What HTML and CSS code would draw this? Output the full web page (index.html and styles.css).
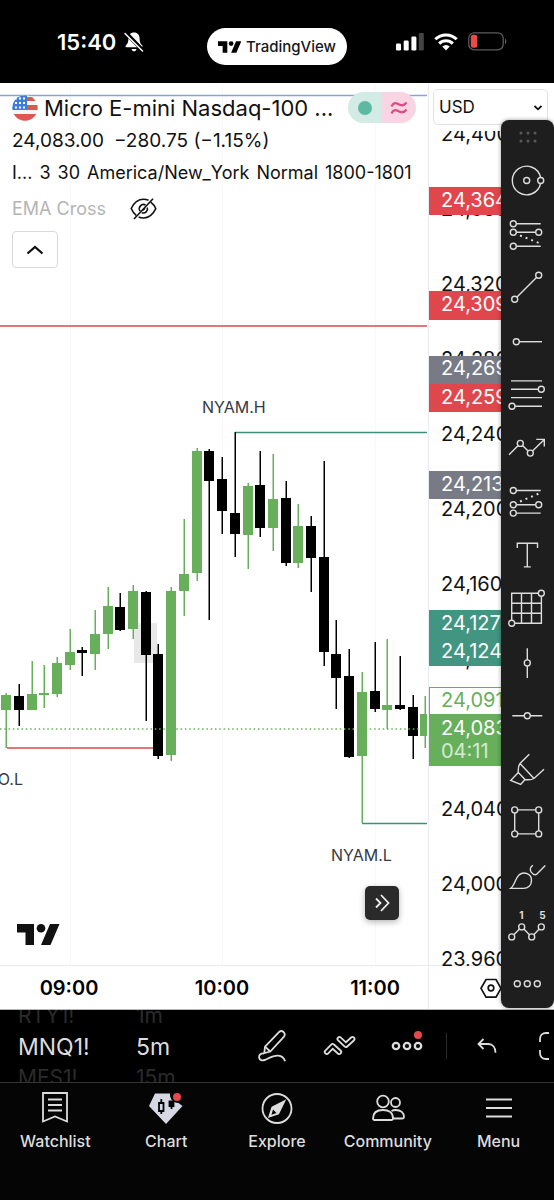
FILE: index.html
```html
<!DOCTYPE html>
<html lang="en">
<head>
  <meta charset="UTF-8">
  <meta name="viewport" content="width=device-width, initial-scale=1.0">
  <title>TradingView</title>
  <link rel="stylesheet" href="styles.css">
</head>
<body>
  <header class="status-bar">
    <div class="status-left">
      <span class="clock">15:40</span>
      <svg width="20" height="20" viewBox="0 0 20 20">
        <path d="M10 0.5c-3.6 0-5.6 2.6-5.6 6 0 4-1 5.500-2.600 7-.7.8-.2 1.800.7 1.800h15c.9 0 1.400-1 .7-1.800-1.600-1.500-2.600-3-2.600-7 0-3.400-2-6-5.600-6z" fill="#fff"/>
        <path d="M7.500 17h5c-.4 1.500-1.300 2.300-2.500 2.300s-2.100-.8-2.500-2.300z" fill="#fff"/>
        <path d="M1.500 0.500l18 18.500" stroke="#000" stroke-width="4"/>
        <path d="M1 1.500l17.500 17.500" stroke="#fff" stroke-width="1.500" stroke-linecap="round"/>
      </svg>
    </div>
    <a class="app-pill" href="#">
      <svg width="23" height="12" viewBox="0 0 42 21">
        <path d="M0 0h17v21H8.500V8.500H0zM33 0h9.500l-9 21h-9.500z"/>
        <circle cx="24" cy="4.300" r="4.300"/>
      </svg>
      <span>TradingView</span>
    </a>
    <div class="status-right">
      <svg width="28" height="18" viewBox="0 0 28 18" fill="#fff">
        <rect x="0" y="10.500" width="5" height="7" rx="1.300"/>
        <rect x="7.700" y="7.500" width="5" height="10" rx="1.300"/>
        <rect x="15.400" y="3.500" width="5" height="14" rx="1.300"/>
        <rect x="22.800" y="0" width="5" height="17.500" rx="1.300" fill="#444"/>
      </svg>
      <svg width="24" height="18" viewBox="0 0 24 18" fill="none" stroke="#fff" stroke-width="3">
        <path d="M1.300 6.300a15.300 15.300 0 0 1 21.400 0"/>
        <path d="M5.200 10.600a9.700 9.700 0 0 1 13.600 0"/>
        <path d="M12 17.500l-3.700-3.900a5.300 5.300 0 0 1 7.400 0z" fill="#fff" stroke="none"/>
      </svg>
      <svg width="39" height="19" viewBox="0 0 39 19">
        <rect x="0.800" y="0.800" width="34.400" height="17" rx="5.500" fill="none" stroke="#5c5c5c" stroke-width="1.300"/>
        <rect x="2.800" y="2.800" width="6.500" height="13" rx="2.500" fill="#f0494a"/>
        <path d="M37 6.500c1.800.8 1.800 5 0 5.800z" fill="#5c5c5c"/>
      </svg>
    </div>
  </header>

  <main class="chart">
    <svg class="chart-canvas" viewBox="0 0 554 927">
      <!-- Grid -->
      <path d="M70.500 0v882M222.500 0v882M375.500 0v882" stroke="#f8f8f8"/>
      <path d="M428.500 0v927M0 882.500h554" stroke="#e9eaf2"/>
      <path d="M0 926.500h554" stroke="#b8b8b8"/>

      <!-- Drawn levels -->
      <path d="M0 12.500h427" stroke="#8c9ee8" stroke-width="1.500"/>
      <path d="M0 243h427" stroke="#d9494b" stroke-width="1.500"/>
      <rect x="134" y="540" width="23" height="40" fill="#e8e8e8"/>
      <path d="M7 665h148" stroke="#d9494b" stroke-width="1.500"/>
      <path d="M235 349.500h192M362 740.500h65" stroke="#3f9079" stroke-width="1.500"/>

      <g id="candles"></g>

      <path d="M0 646h427" stroke="#67af5b" stroke-width="1.300" stroke-dasharray="1.500 2.800"/>

      <g class="level-text">
        <text x="202" y="330">NYAM.H</text>
        <text x="331" y="778">NYAM.L</text>
        <text x="23" y="702" text-anchor="end">O.L</text>
      </g>

      <!-- Price scale -->
      <g class="price-text">
        <text x="441" y="58">24,400</text>
        <text x="441" y="133">24,360</text>
        <text x="441" y="208">24,320</text>
        <text x="441" y="283">24,280</text>
        <text x="441" y="358">24,240</text>
        <text x="441" y="433">24,200</text>
        <text x="441" y="508">24,160</text>
        <text x="441" y="583">24,120</text>
        <text x="441" y="733">24,040</text>
        <text x="441" y="808">24,000</text>
        <text x="441" y="883">23,960</text>
      </g>
      <rect x="429" y="40" width="125" height="8" fill="#fff"/>
      <rect x="429" y="883" width="125" height="8" fill="#fff"/>
      <path d="M429 104h125v28h-125zM429 208h125v29h-125zM429 301h125v28h-125z" fill="#e0474c"/>
      <path d="M429 273h125v28h-125zM429 388h125v28h-125z" fill="#787b86"/>
      <path d="M429 527h125v56h-125z" fill="#429580"/>
      <path d="M429 604h125v79h-125z" fill="#67af5b"/>
      <path d="M430 605h123v26h-123z" fill="#fff"/>
      <g class="price-text light">
        <text x="441" y="124">24,364</text>
        <text x="441" y="228">24,309</text>
        <text x="441" y="292">24,269</text>
        <text x="441" y="321">24,259</text>
        <text x="441" y="408">24,213</text>
        <text x="441" y="547">24,127</text>
        <text x="441" y="575">24,124</text>
        <text x="441" y="624" class="last-high">24,091</text>
        <text x="441" y="652">24,083</text>
        <text x="441" y="675" class="countdown">04:11</text>
      </g>

      <!-- Time scale -->
      <g class="time-text">
        <text x="69" y="912">09:00</text>
        <text x="222" y="912">10:00</text>
        <text x="375" y="912">11:00</text>
      </g>
      <g fill="none" stroke="#111" stroke-width="1.700">
        <path d="M486 896.500h10l5 8.800-5 8.800h-10l-5-8.800z"/>
        <circle cx="491" cy="905" r="2.800"/>
      </g>
    </svg>

    <section class="legend">
      <div class="legend-title">
        <svg width="26" height="26" viewBox="0 0 26 26">
          <clipPath id="flag"><circle cx="13" cy="13" r="12.700"/></clipPath>
          <g clip-path="url(#flag)">
            <path fill="#f5f5f7" d="M0 0h26v26H0z"/>
            <path fill="#e0574f" d="M15 2h11v4H15zM15 10h11v5H15zM0 19h26v7H0z"/>
            <path fill="#3c7dd9" d="M0 0h15v15H0z"/>
            <path d="M3 3.500h12M3 8h12M3 12.500h12" stroke="#fff" stroke-width="2" stroke-dasharray="2 2"/>
          </g>
        </svg>
        <h1>Micro E-mini Nasdaq-100 ...</h1>
        <div class="market-status">
          <span class="open"><i></i></span>
          <span class="approx">
            <svg width="18" height="14" viewBox="0 0 18 14" fill="none" stroke="#dd4c86" stroke-width="2.200">
              <path d="M1.500 5.500C3 2 5.500 1.500 8 3s6 2 8.500-1.500M1.500 12.500C3 9 5.500 8.500 8 10s6 2 8.500-1.500"/>
            </svg>
          </span>
        </div>
      </div>
      <div class="legend-price"><span>24,083.00</span><span>−280.75 (−1.15%)</span></div>
      <div class="legend-row inputs">
        <span>I...</span><span>3</span><span>30</span><span>America/New_York</span><span>Normal</span><span>1800-1801</span>
      </div>
      <div class="legend-row muted">
        <span>EMA Cross</span>
        <button aria-label="Show indicator">
          <svg width="27" height="22" viewBox="0 0 27 22" fill="none" stroke="#111" stroke-width="1.600">
            <path d="M18.500 2.300C17 1.600 15.300 1.200 13.500 1.200 7.500 1.200 3.500 5.500 1.200 10.500 2.200 13 4 15.500 6.200 17.300M8.600 19c1.500.7 3.100 1 4.900 1 6 0 10-4.500 12.300-9.300-1.100-2.700-2.900-5-5-6.600"/>
            <path d="M10 13a4.200 4.200 0 0 1 5.500-6M17.300 9.500a4.200 4.200 0 0 1-5.500 5.200M23 0.800L4 21"/>
            <path d="M13 12.300l2-2"/>
          </svg>
        </button>
      </div>
      <button class="collapse" aria-label="Collapse legend">
        <svg width="18" height="10" viewBox="0 0 18 10" fill="none" stroke="#111" stroke-width="2.300"><path d="M1.500 8.500L9 2l7.500 6.500"/></svg>
      </button>
    </section>

    <label class="currency">
      <select aria-label="Currency">
        <option>USD</option>
      </select>
      <svg width="10" height="6" viewBox="0 0 10 6" fill="none" stroke="#111" stroke-width="1.800"><path d="M1.500 1L5 4.300 8.500 1"/></svg>
    </label>

    <svg class="chart-logo" width="43" height="21" viewBox="0 0 43 21" fill="#111">
      <path d="M0 0h17v21H8.500V8.500H0zM33 0h9.500l-9 21h-9.500z"/>
      <circle cx="24" cy="4.300" r="4.300"/>
    </svg>

    <button class="scroll-last" aria-label="Scroll to the most recent bar">
      <svg width="16" height="18" viewBox="0 0 16 18" fill="none" stroke="#eee" stroke-width="1.800"><path d="M2 4.500L6.500 9 2 13.500M7 1l7.500 8L7 17"/></svg>
    </button>

    <aside class="drawing-bar">
      <div class="drag-handle">
        <svg width="18" height="12" viewBox="0 0 18 12" fill="#5a5a5a">
          <circle cx="2" cy="2" r="1.500"/><circle cx="9" cy="2" r="1.500"/><circle cx="16" cy="2" r="1.500"/>
          <circle cx="2" cy="10" r="1.500"/><circle cx="9" cy="10" r="1.500"/><circle cx="16" cy="10" r="1.500"/>
        </svg>
      </div>
      <div class="tools">
        <button aria-label="Circle"><svg viewBox="0 0 53 48">
          <path d="M39.600 20.500a14.300 14.300 0 1 0 0 6"/><circle cx="25.700" cy="23.500" r="3"/><circle cx="39.700" cy="23.500" r="3"/>
        </svg></button>
        <button aria-label="Fib channel"><svg viewBox="0 0 53 48">
          <path d="M15.300 12.800h24.400M15.300 21.200h19.400M15.300 35.200h24.400"/><path class="dots" d="M19 24.500l19 7.500"/>
          <circle cx="12.300" cy="12.800" r="3"/><circle cx="12.300" cy="21.200" r="3"/><circle cx="37.700" cy="21.200" r="3"/><circle cx="12.300" cy="35.200" r="3"/>
        </svg></button>
        <button aria-label="Trend line"><svg viewBox="0 0 53 48">
          <path d="M16 33l19.500-19.500"/><circle cx="13.700" cy="35.300" r="3"/><circle cx="37.700" cy="11.300" r="3"/>
        </svg></button>
        <button aria-label="Horizontal ray"><svg viewBox="0 0 53 48">
          <path d="M18.300 23.700H41"/><circle cx="15.300" cy="23.700" r="3"/>
        </svg></button>
        <button aria-label="Fib retracement"><svg viewBox="0 0 53 48">
          <path d="M10 9.900h31M10 18.200h27.300M10 26.600h31M14 35.200h27"/><circle cx="40.300" cy="18.200" r="3"/><circle cx="11" cy="35.200" r="3"/>
        </svg></button>
        <button aria-label="Path"><svg viewBox="0 0 53 48">
          <path d="M8 29.700l9.200-9.200M21.500 20.500l5.600 5.500M31.500 26l11.800-11.600M35.300 14.400h8v7"/><circle cx="19.300" cy="18.400" r="3"/><circle cx="29.300" cy="28.100" r="3"/>
        </svg></button>
        <button aria-label="Fib extension"><svg viewBox="0 0 53 48">
          <path d="M15.300 12.500h24.400M15.300 26.800h19.400M15.300 35.100h24.400"/><path class="dots" d="M19 23.500l19-8"/>
          <circle cx="12.300" cy="12.500" r="3"/><circle cx="12.300" cy="26.800" r="3"/><circle cx="37.700" cy="26.800" r="3"/><circle cx="12.300" cy="35.100" r="3"/>
        </svg></button>
        <button aria-label="Text"><svg viewBox="0 0 53 48">
          <path d="M16.300 16v-4.700h20.200V16M26.300 11.300v23.500M22.800 34.900h7"/>
        </svg></button>
        <button aria-label="Gann box"><svg viewBox="0 0 53 48">
          <path d="M37.300 8.300H10.700v26.800M13.700 38.200h26.700V11.300M20.500 8.300v30M30.500 8.300v30M10.700 18.200h29.600M10.700 28.200h29.600"/><circle cx="40.300" cy="8.300" r="3"/><circle cx="10.700" cy="38.200" r="3"/>
        </svg></button>
        <button aria-label="Vertical line"><svg viewBox="0 0 53 48">
          <path d="M26.300 9.200v11.700M26.300 26.900v12"/><circle cx="26.300" cy="23.900" r="3"/>
        </svg></button>
        <button aria-label="Horizontal line"><svg viewBox="0 0 53 48">
          <path d="M11.300 23.700h12M29.300 23.700h12"/><circle cx="26.300" cy="23.700" r="3"/>
        </svg></button>
        <button aria-label="Highlighter"><svg viewBox="0 0 53 48">
          <path d="M28.300 8.200l-9.300 9.300c-1.500 2-2 5-1.700 9l6.700 7c4 .6 6.500.3 9-1l10-9.300M19 17.500l14 15M17.300 26.500l-7.600 8 10 4 4.300-5"/>
        </svg></button>
        <button aria-label="Rectangle"><svg viewBox="0 0 53 48">
          <path d="M16.700 10.900h18M16.700 34.900h18M13.700 13.900v18M37.700 13.900v18"/>
          <circle cx="13.700" cy="10.900" r="3"/><circle cx="37.700" cy="10.900" r="3"/><circle cx="13.700" cy="34.900" r="3"/><circle cx="37.700" cy="34.900" r="3"/>
        </svg></button>
        <button aria-label="Brush"><svg viewBox="0 0 53 48">
          <path d="M9.700 35.400c4-3 4.500-10 8.300-13.500 5-4 12.500-1 12.500 5.500 0 5-3.500 8-8 8z"/>
          <path d="M32 12.400c-2.500 1-3.500 4-2 6.500 1.500 2 4 3.300 5.500 2.500l8.800-9"/>
        </svg></button>
        <button aria-label="Elliott wave"><svg viewBox="0 0 53 48">
          <path d="M12.900 28.700l5.600-5.600M22.900 23.100l5.600 5.600M32.900 28.700l5.200-5.600"/>
          <circle cx="10.700" cy="30.900" r="3"/><circle cx="20.700" cy="20.900" r="3"/><circle cx="30.700" cy="30.900" r="3"/><circle cx="40.300" cy="20.900" r="3"/>
          <text x="20.300" y="13">1</text><text x="41.500" y="13">5</text>
        </svg></button>
        <button aria-label="More tools"><svg viewBox="0 0 53 48">
          <circle cx="16.300" cy="23.700" r="3"/><circle cx="26.300" cy="23.700" r="3"/><circle cx="36.300" cy="23.700" r="3"/>
        </svg></button>
      </div>
    </aside>
  </main>

  <div class="bottom-bar">
    <div class="picker">
      <span>RTY1!</span>
      <strong>MNQ1!</strong>
      <span>MES1!</span>
    </div>
    <div class="picker">
      <span>1m</span>
      <strong>5m</strong>
      <span>15m</span>
    </div>
    <div class="actions">
      <button aria-label="Draw">
        <svg width="32" height="34" viewBox="0 0 32 34">
          <path d="M7.300 24l.7-6.300L22 3.200c1.400-1.400 3.200-1.300 4.500-.2 1.600 1.400 1.700 3.300.3 4.800L13.300 22.500z"/>
          <path d="M8 17.700l5.300 4.800"/>
          <path d="M7 24.500c-3.500-.3-5.300 1.700-4.900 4 .5 2.700 3.200 3.600 6 2.400 4-1.800 8.500-4.600 13-4.200 3.300.3 6 2.300 7 5.600"/>
        </svg>
      </button>
      <button aria-label="Indicators">
        <svg width="34" height="22" viewBox="0 0 34 22">
          <g stroke-linecap="round" stroke-linejoin="round">
            <path d="M3.800 17l5.800-6 6.600 6M16.500 4l6.400 6L29.500 4" stroke-width="5.800"/>
            <path d="M3.800 17l5.800-6 6.600 6M16.500 4l6.400 6L29.500 4" stroke="#000" stroke-width="2.200"/>
          </g>
        </svg>
      </button>
      <button class="more" aria-label="More">
        <svg width="32" height="10" viewBox="0 0 32 10"><g stroke-width="2.300"><circle cx="5" cy="5" r="3.200"/><circle cx="16" cy="5" r="3.200"/><circle cx="27" cy="5" r="3.200"/></g></svg>
        <i class="badge"></i>
      </button>
    </div>
    <div class="history">
      <button aria-label="Undo">
        <svg width="20" height="16" viewBox="0 0 20 16"><path d="M6.500 1L1.500 6l5 5M1.800 6h9.700c4 0 7 3 7 8.800"/></svg>
      </button>
      <button aria-label="Fullscreen">
        <svg width="28" height="28" viewBox="0 0 28 28"><path d="M10 1H7C3.500 1 1 3.500 1 7v3M1 18v3c0 3.500 2.500 6 6 6h3M18 1h3c3.500 0 6 2.500 6 6v3M27 18v3c0 3.500-2.500 6-6 6h-3"/></svg>
      </button>
    </div>
  </div>

  <nav class="tabs">
    <a href="#">
      <svg width="36" height="34" viewBox="0 0 36 34"><path d="M6 2h24v28.500l-12-5-12 5zM11 8.500h14M11 14h14M11 19.500h14"/></svg>
      <span>Watchlist</span>
    </a>
    <a href="#" class="active">
      <svg width="36" height="34" viewBox="0 0 36 34">
        <path d="M7 2.500h15c-.5 5 3 9.500 8.500 9.500l4 3L18 33 1 15z" fill="#d6d8e3" stroke="none"/>
        <path d="M11 12h4.500v8H11zM13.300 8v4M13.300 20v3" stroke="#050505"/>
        <path d="M21.500 10.500h4v4.500h-4zM23.500 14v4" stroke="#050505" fill="#050505"/>
      </svg>
      <i class="badge"></i>
      <span>Chart</span>
    </a>
    <a href="#">
      <svg width="36" height="34" viewBox="0 0 36 34">
        <circle cx="18" cy="17.500" r="14.500"/>
        <path d="M25.300 10.200l-12 6.300-3 9 9-3z" fill="#ddd"/>
        <path d="M14 18.500l3.500 3.500-5 1.700z" fill="#050505" stroke="none"/>
      </svg>
      <span>Explore</span>
    </a>
    <a href="#">
      <svg width="36" height="34" viewBox="0 0 36 34"><circle cx="13" cy="10.500" r="5.800"/><circle cx="25.500" cy="11.500" r="4.500"/><path d="M3 27.500c0-5.500 3.500-8.500 10-8.500s10 3 10 8.500c0 1-.6 1.500-1.500 1.500h-17c-.9 0-1.500-.5-1.500-1.500zM21.500 20c1-.6 2.500-1 4-1 5.500 0 8.500 3 8.500 7 0 1-.6 1.500-1.500 1.500H23"/></svg>
      <span>Community</span>
    </a>
    <a href="#">
      <svg width="36" height="34" viewBox="0 0 36 34"><path d="M5 8.500h26M5 17h26M5 25.500h26"/></svg>
      <span>Menu</span>
    </a>
  </nav>

  <script>
    // x, high, body top, body bottom, low, up
    const candles = [
      [6, 610, 612, 627, 665, 1],
      [19, 601, 613, 627, 643, 0],
      [32, 578, 611, 627, 627, 1],
      [44, 582, 610, 612, 625, 1],
      [57, 574, 580, 611, 614, 1],
      [70, 546, 569, 582, 587, 1],
      [82, 564, 567, 570, 593, 0],
      [95, 527, 551, 571, 587, 1],
      [108, 504, 523, 551, 566, 1],
      [120, 510, 524, 547, 548, 0],
      [133, 502, 508, 546, 556, 1],
      [146, 508, 509, 572, 638, 0],
      [158, 561, 571, 673, 676, 0],
      [171, 504, 508, 672, 678, 1],
      [184, 436, 491, 508, 533, 1],
      [197, 365, 368, 490, 498, 1],
      [209, 366, 368, 398, 537, 0],
      [222, 374, 396, 428, 451, 0],
      [235, 349, 430, 451, 474, 0],
      [248, 400, 403, 452, 486, 1],
      [260, 368, 402, 445, 454, 0],
      [273, 371, 416, 445, 468, 1],
      [286, 398, 415, 480, 483, 0],
      [298, 421, 443, 480, 485, 1],
      [311, 433, 443, 475, 509, 0],
      [324, 378, 474, 569, 583, 0],
      [336, 537, 571, 595, 626, 0],
      [349, 566, 593, 674, 675, 0],
      [362, 589, 609, 673, 740, 1],
      [375, 559, 608, 626, 629, 0],
      [387, 556, 622, 627, 646, 1],
      [400, 573, 622, 626, 627, 0],
      [413, 612, 624, 653, 676, 0],
      [425, 613, 631, 653, 665, 1]
    ];

    const plotRight = 427;

    function addRect(parent, x, y, width, height) {
      const rect = document.createElementNS('http://www.w3.org/2000/svg', 'rect');
      rect.setAttribute('x', x);
      rect.setAttribute('y', y);
      rect.setAttribute('width', width);
      rect.setAttribute('height', height);
      parent.appendChild(rect);
    }

    const group = document.getElementById('candles');
    candles.forEach(([x, high, top, bottom, low, up]) => {
      const candle = document.createElementNS('http://www.w3.org/2000/svg', 'g');
      candle.setAttribute('class', up ? 'up' : 'down');
      addRect(candle, x - 0.5, high, 1.5, low - high);
      addRect(candle, x - 5, top, Math.min(10, plotRight - x + 5), bottom - top);
      group.appendChild(candle);
    });
  </script>
</body>
</html>
```
FILE: styles.css
```css
* {
  box-sizing: border-box;
}

body {
  margin: 0;
  min-height: 100vh;
  display: flex;
  flex-direction: column;
  background: #050505;
  color: #111;
  font-family: Inter, "Liberation Sans", sans-serif;
  overflow-x: hidden;
}

button {
  padding: 0;
  border: none;
  background: none;
  font: inherit;
  color: inherit;
  cursor: pointer;
}

svg {
  display: block;
}

/* Status bar */
.status-bar {
  height: 83px;
  padding-top: 10px;
  display: grid;
  grid-template-columns: 1fr 140px 1fr;
  align-items: center;
  background: #000;
  color: #fff;
}

.status-left {
  display: flex;
  align-items: center;
  gap: 8px;
  padding: 0 0 10px 57px;
}

.clock {
  font-size: 22px;
  font-weight: 600;
  line-height: 24px;
}

.app-pill {
  height: 37px;
  display: flex;
  align-items: center;
  justify-content: center;
  gap: 5px;
  border-radius: 19px;
  background: #fff;
  color: #131722;
  font-size: 15px;
  font-weight: 500;
  text-decoration: none;
}

.status-right {
  display: flex;
  align-items: center;
  justify-content: flex-end;
  gap: 10px;
  padding: 0 47px 10px 0;
}

/* Chart */
.chart {
  position: relative;
  background: #fff;
}

.chart-canvas {
  width: 100%;
  height: auto;
}

.up {
  fill: #67af5b;
}

.down {
  fill: #000;
}

.level-text {
  font-size: 16px;
  fill: #363a45;
}

.price-text {
  font-size: 20px;
  fill: #111;
}

.price-text.light {
  fill: #fff;
}

.price-text .last-high {
  fill: #67af5b;
}

.price-text .countdown {
  fill: #d5ebd1;
}

.time-text {
  font-size: 20px;
  font-weight: 600;
  text-anchor: middle;
}

.legend {
  position: absolute;
  top: 8px;
  left: 12px;
}

.legend-title {
  display: flex;
  align-items: center;
  gap: 6px;
  height: 33px;
}

.legend-title h1 {
  margin: 0;
  width: 288px;
  font-size: 22px;
  font-weight: 400;
  white-space: nowrap;
}

.market-status {
  display: flex;
  width: 68px;
  height: 31px;
  margin-left: 10px;
  border-radius: 16px;
  overflow: hidden;
}

.market-status span {
  flex: 1;
  display: flex;
  align-items: center;
  justify-content: center;
}

.market-status .open {
  background: #d3ebe5;
}

.market-status .approx {
  background: #f9d5e4;
}

.market-status i {
  width: 14px;
  height: 14px;
  border-radius: 50%;
  background: #5eb9a3;
}

.legend-price,
.legend-row {
  display: flex;
  align-items: center;
  height: 32px;
  font-size: 18px;
  white-space: nowrap;
}

.legend-price {
  gap: 10px;
  font-size: 19px;
}

.legend-row.inputs {
  gap: 7px;
}

.legend-row.muted {
  height: 41px;
  gap: 24px;
  color: #b4b4b4;
}

.collapse {
  display: flex;
  align-items: center;
  justify-content: center;
  width: 46px;
  height: 37px;
  margin-top: 2px;
  border: 1px solid #d9d9d9;
  border-radius: 4px;
  background: #fff;
}

.currency {
  position: absolute;
  top: 6px;
  right: 6px;
  width: 115px;
  height: 36px;
}

.currency select {
  width: 100%;
  height: 100%;
  padding: 0 5px;
  border: 1px solid #e2e2e2;
  border-radius: 5px;
  background: #fff;
  color: #111;
  font-family: inherit;
  font-size: 17px;
  appearance: none;
}

.currency svg {
  position: absolute;
  top: 16px;
  right: 5px;
}

.chart-logo {
  position: absolute;
  left: 17px;
  bottom: 65px;
}

.scroll-last {
  position: absolute;
  right: 155px;
  bottom: 90px;
  display: flex;
  align-items: center;
  justify-content: center;
  width: 34px;
  height: 34px;
  border-radius: 5px;
  background: #2a2a2a;
  box-shadow: 0 2px 6px rgba(0, 0, 0, 0.3);
}

/* Floating drawing toolbar */
.drawing-bar {
  position: absolute;
  top: 37px;
  right: 0;
  bottom: 2px;
  display: flex;
  flex-direction: column;
  width: 53px;
  border-radius: 8px;
  background: #1e1e1e;
  box-shadow: 0 0 4px rgba(0, 0, 0, 0.4);
}

.drag-handle {
  display: flex;
  align-items: center;
  justify-content: center;
  height: 37px;
  padding-bottom: 4px;
}

.tools {
  flex: 1;
  display: flex;
  flex-direction: column;
  justify-content: space-between;
}

.tools svg {
  width: 53px;
  height: 48px;
  fill: none;
  stroke: #ddd;
  stroke-width: 1.4;
}

.tools .dots {
  stroke-width: 2;
  stroke-dasharray: 2 4;
}

.tools text {
  fill: #ddd;
  stroke: none;
  font-size: 10px;
  font-weight: 700;
  text-anchor: middle;
}

/* Symbol / interval bar */
.bottom-bar {
  display: flex;
  height: 73px;
  padding-left: 18px;
  border-bottom: 1px solid #333;
  background: #000;
  overflow: hidden;
}

.bottom-bar svg {
  fill: none;
  stroke: #ddd;
  stroke-width: 1.8;
}

.picker {
  display: flex;
  flex-direction: column;
  flex-shrink: 0;
  justify-content: center;
  width: 118px;
  padding-top: 2px;
}

.picker strong {
  color: #ddd;
  font-size: 23px;
  font-weight: 400;
  line-height: 38px;
}

.picker span {
  color: #2b2b2b;
  font-size: 21px;
  line-height: 24px;
}

.actions {
  display: flex;
  flex-shrink: 0;
  align-items: center;
  justify-content: space-between;
  width: 166px;
  margin-left: 3px;
}

.more {
  position: relative;
}

.badge {
  position: absolute;
  width: 8px;
  height: 8px;
  border-radius: 50%;
  background: #e5484d;
}

.more .badge {
  top: -10px;
  right: 1px;
}

.history {
  display: flex;
  flex-shrink: 0;
  align-items: center;
  align-self: center;
  gap: 42px;
  height: 26px;
  margin-left: 23px;
  padding-left: 30px;
  border-left: 1px solid #2b2b2b;
}

/* Tabs */
.tabs {
  flex: 1;
  display: grid;
  grid-template-columns: repeat(5, 1fr);
  align-items: start;
  padding-top: 8px;
  min-height: 117px;
}

.tabs a {
  position: relative;
  display: flex;
  flex-direction: column;
  align-items: center;
  gap: 6px;
  color: #ddd;
  font-size: 16px;
  font-weight: 500;
  line-height: 20px;
  text-decoration: none;
}

.tabs svg {
  fill: none;
  stroke: #ddd;
  stroke-width: 1.8;
}

.tabs .badge {
  top: 2px;
  left: 50%;
  margin-left: 7px;
}
```
